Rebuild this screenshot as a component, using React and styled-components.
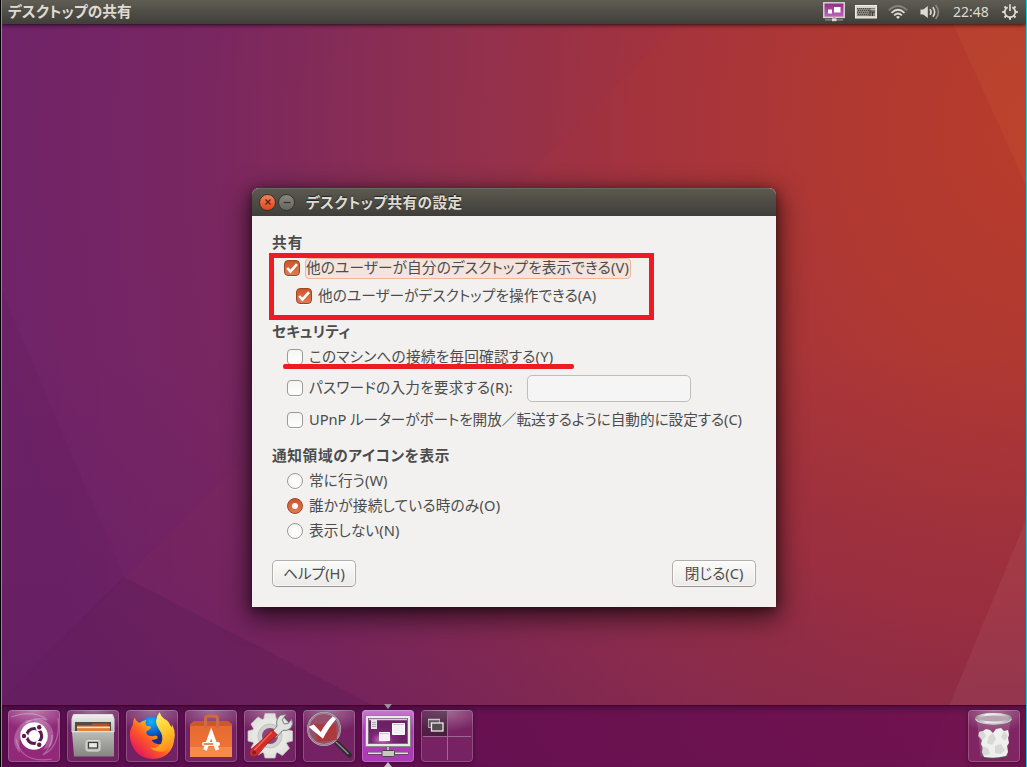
import React from "react";
import styled, { createGlobalStyle, css } from "styled-components";

const Global = createGlobalStyle`
  *, *::before, *::after { box-sizing: border-box; }
  html, body { margin: 0; padding: 0; }
  body {
    width: 1027px;
    height: 767px;
    overflow: hidden;
    background: #000;
    font-family: "Noto Sans", "Noto Sans CJK JP", sans-serif;
    font-size: 14.67px;
    font-feature-settings: "palt";
  }
  svg { display: block; }
`;

const Desktop = styled.div`
  position: relative;
  width: 1027px;
  height: 767px;
  border-left: 1px solid #000;
  border-right: 1px solid #00d8ec;
  overflow: hidden;
  background: #1fb6c4;
`;

const Screen = styled.div`
  position: relative;
  display: flex;
  flex-direction: column;
  width: 1024px;
  height: 767px;
  margin-left: 1px;
  overflow: hidden;
  background:
    linear-gradient(180deg, rgba(80, 16, 76, 0) 45%, rgba(80, 16, 76, 0.2) 100%),
    radial-gradient(ellipse 1060px 1250px at 1040px 130px, #bb3f2b 0%, #b23a31 18%, #a5343e 38%, #92314e 56%, #7b2860 78%, #70246b 100%);
`;

const Wallpaper = styled.svg`
  position: absolute;
  inset: 0;
`;

const Panel = styled.header`
  position: relative;
  flex: none;
  display: flex;
  align-items: center;
  justify-content: space-between;
  height: 24px;
  padding: 0 8px 0 6px;
  color: #dfdbd2;
  background: linear-gradient(#5f5d53, #3f3e39);
  box-shadow: 0 1px 4px rgba(0, 0, 0, 0.75);
`;

const Label = styled.span`
  white-space: nowrap;
  line-height: 20px;
  padding-bottom: 2px;
  letter-spacing: ${(p) => p.$track || 0}px;
  font-weight: ${(p) => (p.$bold ? 700 : 400)};
`;

const Indicators = styled.div`
  display: flex;
  align-items: center;
  height: 24px;
`;

const Indicator = styled.span`
  display: flex;
  margin-right: ${(p) => p.$after || 0}px;
`;

const Clock = styled.time`
  width: 37px;
  margin-right: 12px;
  font-size: 14px;
  line-height: 24px;
  letter-spacing: 0;
`;

const Stage = styled.main`
  position: relative;
  flex: 1;
  display: flex;
  padding: 164px 0 0 250px;
`;

const Window = styled.section`
  width: 524px;
  height: 419px;
  border-radius: 7px 7px 0 0;
  background: #f2f1f0;
  box-shadow: 0 8px 26px 3px rgba(0, 0, 0, 0.62), 0 2px 8px rgba(0, 0, 0, 0.4);
`;

const TitleBar = styled.div`
  display: flex;
  align-items: center;
  height: 28px;
  padding: 0 7px 1px;
  border-radius: 7px 7px 0 0;
  border-top: 1px solid #6b695f;
  color: #dfdbd2;
  background: linear-gradient(#5b594f, #3f3e39);
  text-shadow: 0 -1px 1px #222;
`;

const WindowButton = styled.span`
  display: grid;
  place-items: center;
  width: 17px;
  height: 17px;
  margin-right: 2px;
  border: 1px solid #34332f;
  border-radius: 50%;
  background: ${(p) => (p.$close ? "linear-gradient(#f58058, #dd481b)" : "linear-gradient(#8b897f, #66645c)")};
`;

const WindowTitle = styled.h1`
  margin: 0 0 0 9px;
  font-size: 14.67px;
  line-height: 22px;
  padding-bottom: 1px;
  font-weight: 700;
  letter-spacing: 0.42px;
`;

const Body = styled.div`
  display: flex;
  flex-direction: column;
  padding: 17px 20px 0;
  color: #4c4c4c;
`;

const Heading = styled.h2`
  height: 20px;
  margin: ${(p) => p.$top || 0}px 0 0;
  font-size: 14.67px;
  line-height: 18px;
  font-weight: 700;
  letter-spacing: ${(p) => p.$track || 0}px;
`;

const Row = styled.label`
  display: flex;
  align-items: center;
  height: ${(p) => p.$height || 25}px;
  margin-top: ${(p) => p.$top || 0}px;
  padding-left: ${(p) => p.$indent || 15}px;
  gap: 6px;
`;

const mark = css`
  flex: none;
  display: grid;
  place-items: center;
  width: 16px;
  height: 16px;
  border: 1px solid ${(p) => (p.$on ? "#9c4424" : "#9b9a98")};
  background: ${(p) => (p.$on ? "linear-gradient(#d0532a, #e07c54)" : "linear-gradient(#f4f4f3, #fff)")};
  box-shadow: 0 1px 0 #fff;
`;

const CheckMark = styled.span`
  ${mark}
  border-radius: 4px;
`;

const RadioMark = styled.span`
  ${mark}
  border-radius: 50%;
  &::after {
    content: "";
    width: 6px;
    height: 6px;
    border-radius: 50%;
    background: #fff;
  }
`;

const FocusLabel = styled.span`
  display: flex;
  align-items: center;
  height: 21px;
  width: 326px;
  margin-left: -1px;
  padding: 0 0 1px;
  border: 1px solid #f1b49d;
  border-radius: 4px;
  background: #f3e4de;
`;

const Entry = styled.input`
  width: 164px;
  height: 27px;
  margin-left: auto;
  margin-right: 65px;
  padding: 0 6px;
  border: 1px solid #bfbebc;
  border-radius: 5px;
  background: #f5f5f5;
  outline: none;
`;

const Actions = styled.div`
  display: flex;
  justify-content: space-between;
  margin-top: 17px;
`;

const Button = styled.button`
  width: 84px;
  height: 27px;
  padding: 0 0 1px;
  border: 1px solid #b1afab;
  border-bottom-color: #989692;
  border-radius: 5px;
  color: #4c4c4c;
  font: inherit;
  font-feature-settings: inherit;
  line-height: 22px;
  background: linear-gradient(#fbfbfa, #ebeae8);
  box-shadow: inset 0 0 0 1px rgba(255, 255, 255, 0.65);
`;

const Highlight = styled.div`
  position: absolute;
  left: 267px;
  top: 229px;
  width: 385px;
  height: 67px;
  border: 5px solid #ed1c24;
`;

const Underline = styled.div`
  position: absolute;
  left: 281px;
  top: 340px;
  width: 291px;
  height: 5px;
  border-radius: 2px;
  background: #ed1c24;
`;

const Dock = styled.nav`
  position: relative;
  flex: none;
  display: flex;
  gap: 7px;
  height: 62px;
  padding: 5px 6px 0 6px;
  background: linear-gradient(90deg, rgba(92, 12, 80, 0.84), rgba(108, 14, 80, 0.86));
  box-shadow: inset 0 1px 0 rgba(40, 10, 40, 0.7), inset 0 4px 5px rgba(30, 0, 30, 0.35);
`;

const Tile = styled.div`
  position: relative;
  width: 52px;
  height: 52px;
  margin-left: ${(p) => (p.$end ? "auto" : 0)};
  border-radius: 4px;
  background: ${(p) => p.$fill || "radial-gradient(ellipse 40px 22px at 50% 0, rgba(255,255,255,.34), transparent), rgba(170, 90, 150, .26)"};
  box-shadow: inset 0 0 0 1px rgba(255, 255, 255, 0.2), 0 1px 4px rgba(20, 0, 20, 0.45);
`;

const Pip = styled.i`
  position: absolute;
  left: 22px;
  ${(p) => (p.$bottom ? "bottom: -5px; border-bottom: 5px solid #c9bfc7;" : "top: -6px; border-top: 5px solid #99919a;")}
  border-left: 4px solid transparent;
  border-right: 4px solid transparent;
`;

const Check = () => (
  <svg width="14" height="14" viewBox="0 0 14 14">
    <path d="M2.2 7 5.4 10.6 12 3.2" fill="none" stroke="#fff" strokeWidth="2.6" />
  </svg>
);

const TrayDesktop = () => (
  <svg width="22" height="20" viewBox="0 0 22 20">
    <defs>
      <linearGradient id="trayFill" x1="0" y1="0" x2="0" y2="1">
        <stop offset="0" stopColor="#8b2d85" />
        <stop offset="1" stopColor="#c266bf" />
      </linearGradient>
    </defs>
    <rect x=".8" y=".8" width="20.4" height="14.6" fill="url(#trayFill)" stroke="#d6d2cf" strokeWidth="1.5" />
    <rect x="5" y="7.5" width="4" height="4" fill="#fff" />
    <rect x="11" y="5" width="6.5" height="5.5" fill="#fff" />
    <path d="M2 17.8h18M11 15v3" stroke="#96928b" strokeWidth="1.2" />
    <rect x="9" y="16.4" width="4.5" height="2.8" fill="#dedad3" />
  </svg>
);

const Keyboard = () => (
  <svg width="22" height="14" viewBox="0 0 22 14">
    <rect x=".5" y=".5" width="21" height="12.5" fill="#d8d4cb" stroke="#efece5" />
    <rect x="2" y="3" width="18" height="8" fill="#88857d" />
    <path d="M2 3.5h12M3 5.5h11M2 7.5h12M3 9.5h11" stroke="#4b4943" strokeDasharray="1 1" />
    <path d="M15 3v8M15 7h5M17.5 7v4" stroke="#3f3d38" />
    <path d="M15.5 4.5h4.5" stroke="#dfdbd2" strokeDasharray="1 1" />
  </svg>
);

const Wifi = () => (
  <svg width="20" height="16" viewBox="0 0 20 16" fill="none" strokeWidth="1.7">
    <path d="M.8 6.3Q10-2.3 19.2 6.3" stroke="#85827a" />
    <path d="M3.5 8.8Q10 2.7 16.5 8.8M6.1 11.4Q10 7.6 13.9 11.4" stroke="#dfdbd2" />
    <path d="M8 12.9q2-1.6 4 0L10 15z" fill="#dfdbd2" />
  </svg>
);

const Volume = () => (
  <svg width="20" height="16" viewBox="0 0 20 16" fill="none" strokeWidth="1.6">
    <path d="M.5 5.5h2.8L7.8 2v12L3.3 10.5H.5z" fill="#dfdbd2" />
    <path d="M10 5.2q2.2 2.8 0 5.6M12.8 3.2q3.8 4.8 0 9.6" stroke="#dfdbd2" />
    <path d="M15.6 1q5.6 7 0 14" stroke="#8d8a82" />
  </svg>
);

const Power = () => (
  <svg width="16" height="16" viewBox="0 0 16 16" fill="none" stroke="#dfdbd2">
    <path d="M5.7 3.2a5.3 5.3 0 1 0 4.6 0" strokeWidth="1.8" />
    <path d="M8 .3v6.7" strokeWidth="1.7" />
    <path d="M8 13v2.8M.2 8h2.6M13.2 8h2.6M2.5 2.5 4.2 4.2M13.5 2.5l-1.7 1.7M2.5 13.5l1.7-1.7M13.5 13.5l-1.7-1.7" strokeWidth="2" />
  </svg>
);

const UbuntuLogo = () => (
  <svg width="52" height="52" viewBox="0 0 52 52" fill="none">
    <path d="M26 9C42 8 50 22 43 36L35 40Q47 22 26 12zM12 43C2 33 5 19 19 10l9 0Q8 17 12 43z" fill="#fff" opacity=".24" />
    <path d="M3 7Q26-1 39 10 27 6 18 13M50 8Q53 36 35 45q10-10 9-20M44 49Q13 54 8 29" stroke="#fff" strokeWidth="1.2" opacity=".28" />
    <circle cx="26" cy="26" r="13.8" fill="#fff" />
    <circle cx="26.2" cy="26" r="7.5" stroke="#5c1c50" strokeWidth="3.2" />
    <path d="M26.2 26 15.5 26M26.2 26l5.3-9.2M26.2 26l5.3 9.2" stroke="#fff" strokeWidth="1.4" />
    <circle cx="16.5" cy="26" r="3.3" fill="#fff" /><circle cx="31" cy="17.6" r="3.3" fill="#fff" /><circle cx="31" cy="34.4" r="3.3" fill="#fff" />
    <circle cx="16" cy="26" r="2.2" fill="#5c1c50" /><circle cx="31.2" cy="17.3" r="2.2" fill="#5c1c50" /><circle cx="31.2" cy="34.7" r="2.2" fill="#5c1c50" />
  </svg>
);

const FilesIcon = () => (
  <svg width="52" height="52" viewBox="0 0 52 52">
    <defs>
      <linearGradient id="cab" x1="0" y1="0" x2="0" y2="1"><stop offset="0" stopColor="#bcbcb9" /><stop offset="1" stopColor="#858582" /></linearGradient>
      <linearGradient id="cabTop" x1="0" y1="0" x2="0" y2="1"><stop offset="0" stopColor="#f2f2ef" /><stop offset="1" stopColor="#b3b3b0" /></linearGradient>
    </defs>
    <path d="M6.5 4.5h39L47 9v13H5V9z" fill="url(#cabTop)" stroke="#ddd" />
    <rect x="8" y="12" width="36" height="11" fill="#514a45" />
    <path d="M10 16q0-1 1-1h13l2-1.5h15q1 0 1 1V22H10z" fill="#b85222" />
    <rect x="10" y="16.5" width="33" height="2" fill="#ffe1b4" /><rect x="10" y="18.5" width="33" height="3" fill="#e77d35" />
    <path d="M5 21.5h42v25H7z" fill="url(#cab)" />
    <path d="M5 21.7h42" stroke="#e2e2df" strokeWidth="1.2" />
    <rect x="19" y="30.5" width="14" height="10.5" rx="2" fill="#bcbcb9" stroke="#dededb" />
    <rect x="21.5" y="32.5" width="9" height="5.5" fill="#e8e8e5" stroke="#3d3d3b" strokeWidth="1.2" />
  </svg>
);

const FirefoxIcon = () => (
  <svg width="52" height="52" viewBox="0 0 52 52">
    <defs>
      <linearGradient id="fox" x1=".9" y1=".05" x2=".15" y2=".85"><stop offset="0" stopColor="#fff04d" /><stop offset=".35" stopColor="#ffb51f" /><stop offset=".62" stopColor="#ff5b25" /><stop offset="1" stopColor="#e31b59" /></linearGradient>
      <linearGradient id="tail" x1=".3" y1="0" x2=".6" y2="1"><stop offset="0" stopColor="#fff46a" /><stop offset=".5" stopColor="#ffca2e" /><stop offset="1" stopColor="#ff8a1b" /></linearGradient>
      <radialGradient id="globe" cx=".45" cy=".15"><stop offset="0" stopColor="#16b4f5" /><stop offset=".6" stopColor="#0a67d3" /><stop offset="1" stopColor="#173189" /></radialGradient>
    </defs>
    <circle cx="27" cy="24" r="17.5" fill="url(#globe)" />
    <path d="M8.5 7.5q1.5 4 5 5.5 3-2.5 6.8-3-1.8 3 .4 6 4 .1 4.3 1.2 0 1.7-4.7 4.2-.4 3.1 3.1 4.4 3.3 1 6-.2 2.4.3 2.4 2.7-3.1 2-6.2 1.8 2.3 4.2 7.1 4.1 10-.7 10.4-13 0-5-3.3-9 4 1.5 6 5.1Q49 20 48 30.5 45.5 48 27 49 8 48 4.2 29q-1.3-9 2.8-14.5Q6.8 11 8.5 7.5" fill="url(#fox)" />
    <path d="M33.6 2.3Q27 10.5 32.8 19q5.7 7.6 2.4 14.4-4 5.7-11.2 4.1 12.5 9.5 22-2Q51.5 25 46.2 14.5q.1 3-1.2 3.8Q44 11 38.1 8.7 34.8 6.3 33.6 2.3" fill="url(#tail)" />
  </svg>
);

const SoftwareIcon = () => (
  <svg width="52" height="52" viewBox="0 0 52 52" fill="none">
    <defs><linearGradient id="bag" x1="0" y1="0" x2="0" y2="1"><stop offset="0" stopColor="#e56a31" /><stop offset="1" stopColor="#f27638" /></linearGradient></defs>
    <path d="M5 14h42v33H5z" fill="url(#bag)" />
    <path d="M5 14l4-3h34l4 3v2H5z" fill="#c9582f" />
    <path d="M5 37h42v10H5z" fill="#f58a4d" />
    <path d="M20.5 18V9q0-3 3-3h6q3 0 3 3v9" stroke="#cf6a43" strokeWidth="3" />
    <path d="M20 40 26.2 23 32.4 40M24.5 23.6h3.5" stroke="#fff" strokeWidth="3.8" />
    <rect x="17" y="32" width="18" height="4" rx="2" fill="#fff" /><rect x="18.5" y="33.3" width="10" height="1.5" rx=".7" fill="#e76427" />
  </svg>
);

const SettingsIcon = () => (
  <svg width="52" height="52" viewBox="0 0 52 52">
    <g fill="#e2e2df" stroke="#c4c4c1" strokeWidth=".7">
      {[0, 45, 90, 135].map((a) => <path key={a} d="M21 3.5h10l2 8v29l-2 7.5H21l-2-7.5v-29z" transform={`rotate(${a} 26 26)`} />)}
    </g>
    <circle cx="26" cy="26" r="17.8" fill="#e7e7e4" />
    <circle cx="26" cy="26" r="12" fill="#d2d1cf" stroke="#c4c3c1" strokeWidth="1" /><circle cx="26" cy="26" r="8" fill="#8a477c" />
    <path d="M27 23.5 33 16q-1.6-6.7 3.4-10.7l5.7-.9-4 5.4 2 4.1 4.3-.4 3.1-4.4q2.4 5.4-.8 9-3.4 3.1-8.1 2.4L32 28z" fill="#e0e2df" stroke="#7d7f7c" />
    <path d="M28 19.5 33.5 25Q23 32 14.4 44.3q-3.2 3.5-7 1.7-3.8-2.7-.5-6.5Q18.4 30.5 28 19.5z" fill="#d22d26" stroke="#991b1b" strokeWidth=".8" />
    <path d="M27.7 22 10.2 40.2" stroke="#f06358" strokeWidth="1.5" /><circle cx="10.2" cy="42.4" r="2" fill="#7b2039" />
  </svg>
);

const LensIcon = () => (
  <svg width="52" height="52" viewBox="0 0 52 52" fill="none">
    <path d="m34 33 12.5 12" stroke="#2e2b2d" strokeWidth="5" strokeLinecap="round" />
    <path d="m33 32 12.5 12" stroke="#8f8a8d" strokeWidth="1.5" />
    <circle cx="21" cy="19" r="16" fill="#96506d" stroke="#b9b0b5" strokeWidth="2" />
    <path d="M11 14h22l1 16-20 2z" fill="#b23431" opacity=".8" />
    <path d="M5.5 16.8l5.3-2.3 7 7.5Q23 12.5 30 6.2l3.6 2.2Q25 18 20 28.7z" fill="#fff" />
    <circle cx="21" cy="19" r="16" stroke="#67515a" strokeWidth=".6" />
  </svg>
);

const SharingIcon = () => (
  <svg width="52" height="52" viewBox="0 0 52 52">
    <defs><radialGradient id="mon" cx=".35" cy=".85"><stop offset="0" stopColor="#d779c7" /><stop offset=".55" stopColor="#7c2877" /><stop offset="1" stopColor="#6d2165" /></radialGradient></defs>
    <rect x="3.5" y="5.5" width="45" height="31" fill="#e9e9e7" stroke="#8a8988" />
    <rect x="6.5" y="8.5" width="39" height="25" fill="url(#mon)" stroke="#7d6a7c" />
    <path d="M7 9.5h38" stroke="#d9c7d7" strokeWidth="1.4" />
    <path d="M9 10h6v9H9z" fill="#e8e3e8" /><path d="M10 12.5h4M10 14.5h4M10 16.5h4" stroke="#9a8a9a" strokeWidth=".7" />
    <path d="M30.5 13.5h12v11h-12zM17.5 22.5h10v8h-10z" fill="#f7edf6" stroke="#fff" /><path d="M31 14.5h11M18 23.5h9" stroke="#d2c3d0" />
    <path d="M26 37v4M5.5 43.5h41" stroke="#6b4069" strokeWidth="3" /><path d="M26 37v4M6 43.3h40" stroke="#e1dfdd" strokeWidth="1.5" />
    <rect x="20" y="40.5" width="12.5" height="6" rx="1" fill="#c9c7c3" stroke="#4b4548" />
  </svg>
);

const WorkspaceIcon = () => (
  <svg width="52" height="52" viewBox="0 0 52 52" fill="none">
    <defs><linearGradient id="activeSpace" x1="0" y1="0" x2="1" y2="1"><stop offset="0" stopColor="#241c22" stopOpacity=".3" /><stop offset="1" stopColor="#241c22" stopOpacity=".62" /></linearGradient></defs>
    <rect x="1" y="1" width="25" height="25" fill="url(#activeSpace)" />
    <path d="M26.5 2v48M2 26.5h48" stroke="#9a6a8f" />
    <rect x="7.5" y="9.5" width="11" height="8" fill="#61565d" stroke="#a69fa4" /><path d="M7 9.5h12" stroke="#cdc7cb" strokeWidth="1.5" />
    <rect x="10.5" y="13" width="11.5" height="8" fill="#554d51" stroke="#eeeaec" strokeWidth="1.3" />
  </svg>
);

const TrashIcon = () => (
  <svg width="52" height="52" viewBox="0 0 52 52">
    <defs><linearGradient id="rim"><stop offset="0" stopColor="#999" /><stop offset=".3" stopColor="#f3f3f3" /><stop offset=".7" stopColor="#ddd" /><stop offset="1" stopColor="#999" /></linearGradient></defs>
    <path d="M9.5 10h32l-2.5 36q-13 4-26 0z" fill="#ddd" opacity=".16" stroke="#eee" />
    <ellipse cx="26" cy="46.5" rx="12.5" ry="2" fill="#4f494d" />
    <path d="M11 22l4-1 3-2 4 1 3 3 3-4 5-1 3 3 4-1 1 5-1 3 1 5-2 3 1 6-2 4q-11 3-22 1l-2-5 1-4-2-4 1-4-3-4z" fill="#efefed" />
    <path d="M11 22l4-1 3 5-4 5-1-2-3-3zM25 23l3 6-4 6-5-2 2-7zM36 21l-3 6 4 4 3-5zM14 36l6 2 2 6-7 2zM27 36l6-2 4 6-4 4-6-1z" fill="#cfcfcc" opacity=".75" />
    <ellipse cx="25.5" cy="8.5" rx="17.2" ry="4.3" fill="#b9a3b3" stroke="url(#rim)" strokeWidth="2.6" />
    <path d="M8 9q0 4 17.5 5Q43 13 43 9" fill="none" stroke="#ccc" strokeWidth="1.4" />
  </svg>
);

function CheckRow({ on, track, children, extra, ...row }) {
  return (
    <Row {...row}>
      <CheckMark $on={on}>{on && <Check />}</CheckMark>
      <Label $track={track}>{children}</Label>
      {extra}
    </Row>
  );
}

function RadioRow({ on, track, children, ...row }) {
  return (
    <Row {...row}>
      <RadioMark $on={on} />
      <Label $track={track}>{children}</Label>
    </Row>
  );
}

export default function App() {
  return (
    <>
      <Global />
      <Desktop>
        <Screen>
          <Wallpaper width="1024" height="767" viewBox="0 0 1024 767">
            <polygon points="0,0 674,24 0,700" fill="#5c1a70" opacity=".04" />
            <polygon points="674,24 0,700 0,767 1024,767 1024,24" fill="#a03040" opacity=".05" />
            <polygon points="8,310 122,577 0,700 0,290" fill="#3c1048" opacity=".06" />
            <polygon points="0,700 122,577 370,705 490,767 0,767" fill="#3c1048" opacity=".14" />
            <polygon points="951,24 1024,185 1024,24" fill="#d8703c" opacity=".14" />
            <polygon points="1024,520 948,704 923,767 1024,767" fill="#fff" opacity=".05" />
          </Wallpaper>
          <Panel>
            <Label $bold $track={0.12}>デスクトップの共有</Label>
            <Indicators>
              <Indicator $after={10}><TrayDesktop /></Indicator>
              <Indicator $after={11}><Keyboard /></Indicator>
              <Indicator $after={12}><Wifi /></Indicator>
              <Indicator $after={13}><Volume /></Indicator>
              <Clock>22:48</Clock>
              <Indicator><Power /></Indicator>
            </Indicators>
          </Panel>
          <Stage>
            <Window>
              <TitleBar>
                <WindowButton $close>
                  <svg width="8" height="8" viewBox="0 0 8 8"><path d="m1.5 1.5 5 5m0-5-5 5" stroke="#55230f" strokeWidth="1.3" /></svg>
                </WindowButton>
                <WindowButton>
                  <svg width="8" height="8" viewBox="0 0 8 8"><path d="M.5 4.5h7" stroke="#33322e" strokeWidth="1.2" /></svg>
                </WindowButton>
                <WindowTitle>デスクトップ共有の設定</WindowTitle>
              </TitleBar>
              <Body>
                <Heading $track={1}>共有</Heading>
                <Row $height={28} $top={1} $indent={12}>
                  <CheckMark $on><Check /></CheckMark>
                  <FocusLabel><Label $track={0.14}>他のユーザーが自分のデスクトップを表示できる(V)</Label></FocusLabel>
                </Row>
                <CheckRow on $height={28} $indent={24} track={0.07}>他のユーザーがデスクトップを操作できる(A)</CheckRow>
                <Heading $top={12} $track={0.2}>セキュリティ</Heading>
                <CheckRow $height={30} track={0.2}>このマシンへの接続を毎回確認する(Y)</CheckRow>
                <CheckRow $height={32} track={0.2} extra={<Entry aria-label="パスワード" />}>パスワードの入力を要求する(R):</CheckRow>
                <CheckRow $height={32} track={-0.06}>UPnP ルーターがポートを開放／転送するように自動的に設定する(C)</CheckRow>
                <Heading $top={10} $track={0.65}>通知領域のアイコンを表示</Heading>
                <RadioRow $top={2} track={0.08}>常に行う(W)</RadioRow>
                <RadioRow on track={0.2}>誰かが接続している時のみ(O)</RadioRow>
                <RadioRow track={0.06}>表示しない(N)</RadioRow>
                <Actions>
                  <Button>ヘルプ(H)</Button>
                  <Button>閉じる(C)</Button>
                </Actions>
              </Body>
            </Window>
            <Highlight />
            <Underline />
          </Stage>
          <Dock>
            <Tile $fill="radial-gradient(ellipse 38px 20px at 50% 0, rgba(255,255,255,.4), transparent), #912879"><UbuntuLogo /></Tile>
            <Tile><FilesIcon /></Tile>
            <Tile><FirefoxIcon /></Tile>
            <Tile><SoftwareIcon /></Tile>
            <Tile><SettingsIcon /></Tile>
            <Tile><LensIcon /></Tile>
            <Tile $fill="linear-gradient(#c77bd0, #ad3bb6 40%)"><Pip /><SharingIcon /><Pip $bottom /></Tile>
            <Tile><WorkspaceIcon /></Tile>
            <Tile $end><TrashIcon /></Tile>
          </Dock>
        </Screen>
      </Desktop>
    </>
  );
}
